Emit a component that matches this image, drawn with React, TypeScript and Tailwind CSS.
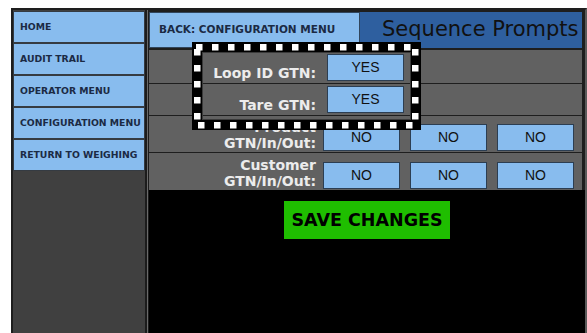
const navItems = ["HOME", "AUDIT TRAIL", "OPERATOR MENU", "CONFIGURATION MENU", "RETURN TO WEIGHING"];

const ValueButton = ({ label, className = "" }: { label: string; className?: string }) => (
  <div
    className={`w-[77px] h-[27px] shrink-0 flex items-center justify-center bg-[#88bcee] border border-[#2c3e52] text-[14px] text-[#111] font-['Liberation_Sans',sans-serif] ${className}`}
  >
    {label}
  </div>
);

// dashed highlight frame drawn over the first two prompts
const HighlightFrame = () => {
  const top = Array.from({ length: 14 }, (_, i) => 4 + i * 16);
  const side = Array.from({ length: 5 }, (_, i) => 7 + i * 16);
  return (
    <svg className="absolute left-[192px] top-[42px]" width="229" height="88" viewBox="0 0 229 88">
      <rect x="5" y="5" width="219" height="78" fill="none" stroke="#000" strokeWidth="10" />
      <rect x="10.5" y="10.5" width="208" height="67" fill="none" stroke="#3a3a3a" strokeWidth="1" />
      {top.map((x) => (
        <rect key={"t" + x} x={x} y="2" width="6.5" height="6.5" fill="#fff" />
      ))}
      {top.map((x) => (
        <rect key={"b" + x} x={x + 2} y="80" width="6.5" height="6.5" fill="#fff" />
      ))}
      {side.map((y) => (
        <rect key={"l" + y} x="2" y={y} width="6.5" height="6.5" fill="#fff" />
      ))}
      {side.map((y) => (
        <rect key={"r" + y} x="220" y={y} width="6.5" height="6.5" fill="#fff" />
      ))}
    </svg>
  );
};

export default function App() {
  return (
    <div className="relative w-[587px] h-[333px] bg-white overflow-hidden font-['DejaVu_Sans',sans-serif]">
      <div className="absolute left-[11px] top-[8px] right-0 bottom-0 flex bg-[#1e1e1e] border-t-2 border-l-2 border-r-2 border-t-[#1e1e1e] border-l-[#1e1e1e] border-r-[#5a5a5a]">
        {/* sidebar */}
        <div className="w-[132px] bg-[#404040] flex flex-col pt-px">
          {navItems.map((item) => (
            <div
              key={item}
              className="h-[32px] flex items-center pl-[6px] bg-[#88bcee] border border-[#353b42] text-[9.3px] font-bold text-[#1b2a44] whitespace-nowrap"
            >
              {item}
            </div>
          ))}
        </div>
        <div className="w-[4px] flex">
          <div className="w-[2px] bg-[#1c1c1c]" />
          <div className="w-px bg-[#6a6a6a]" />
          <div className="w-px bg-[#1c1c1c]" />
        </div>

        {/* main panel */}
        <div className="flex-1 flex flex-col bg-black">
          <div className="bg-[#1e1e1e] pt-[2px] pr-[3px]">
            <div className="flex h-[36px]">
              <div className="w-[211px] flex items-center pl-[9px] bg-[#88bcee] border border-[#30455c] text-[10.5px] font-bold text-[#1b2a44] whitespace-nowrap">
                BACK: CONFIGURATION MENU
              </div>
              <div className="flex-1 flex items-center pl-[22px] bg-[#2e5f9f] text-[21px] text-[#111] whitespace-nowrap">
                Sequence Prompts
              </div>
            </div>
            <div className="h-[2px]" />
            <div className="flex flex-col">
              <div className="h-[34px] flex items-end pb-[2px] bg-[#616161] border-b border-[#1e1e1e]">
                <div className="w-[167px] text-right text-[14px] leading-[16px] font-bold text-[#ececec]">Loop ID GTN:</div>
                <ValueButton label="YES" className="ml-[11px]" />
              </div>
              <div className="h-[32px] flex items-end pb-[2px] bg-[#616161] border-b border-[#1e1e1e]">
                <div className="w-[167px] text-right text-[14px] leading-[16px] font-bold text-[#ececec]">Tare GTN:</div>
                <ValueButton label="YES" className="ml-[11px]" />
              </div>
              <div className="h-[37px] flex items-end pb-[1px] bg-[#616161] border-b border-[#1e1e1e]">
                <div className="w-[167px] text-right text-[14px] leading-[16px] font-bold text-[#ececec]">
                  Product
                  <br />
                  GTN/In/Out:
                </div>
                <div className="flex gap-[10px] ml-[7px]">
                  <ValueButton label="NO" />
                  <ValueButton label="NO" />
                  <ValueButton label="NO" />
                </div>
              </div>
              <div className="h-[37px] flex items-end pb-[1px] bg-[#616161]">
                <div className="w-[167px] text-right text-[14px] leading-[16px] font-bold text-[#ececec]">
                  Customer
                  <br />
                  GTN/In/Out:
                </div>
                <div className="flex gap-[10px] ml-[7px]">
                  <ValueButton label="NO" />
                  <ValueButton label="NO" />
                  <ValueButton label="NO" />
                </div>
              </div>
            </div>
          </div>
          <div className="flex justify-center pt-[11px]">
            <div className="w-[166px] h-[38px] flex items-center justify-center bg-[#1fbe00] text-[17.5px] font-bold text-black">
              SAVE CHANGES
            </div>
          </div>
        </div>
      </div>
      <HighlightFrame />
    </div>
  );
}
